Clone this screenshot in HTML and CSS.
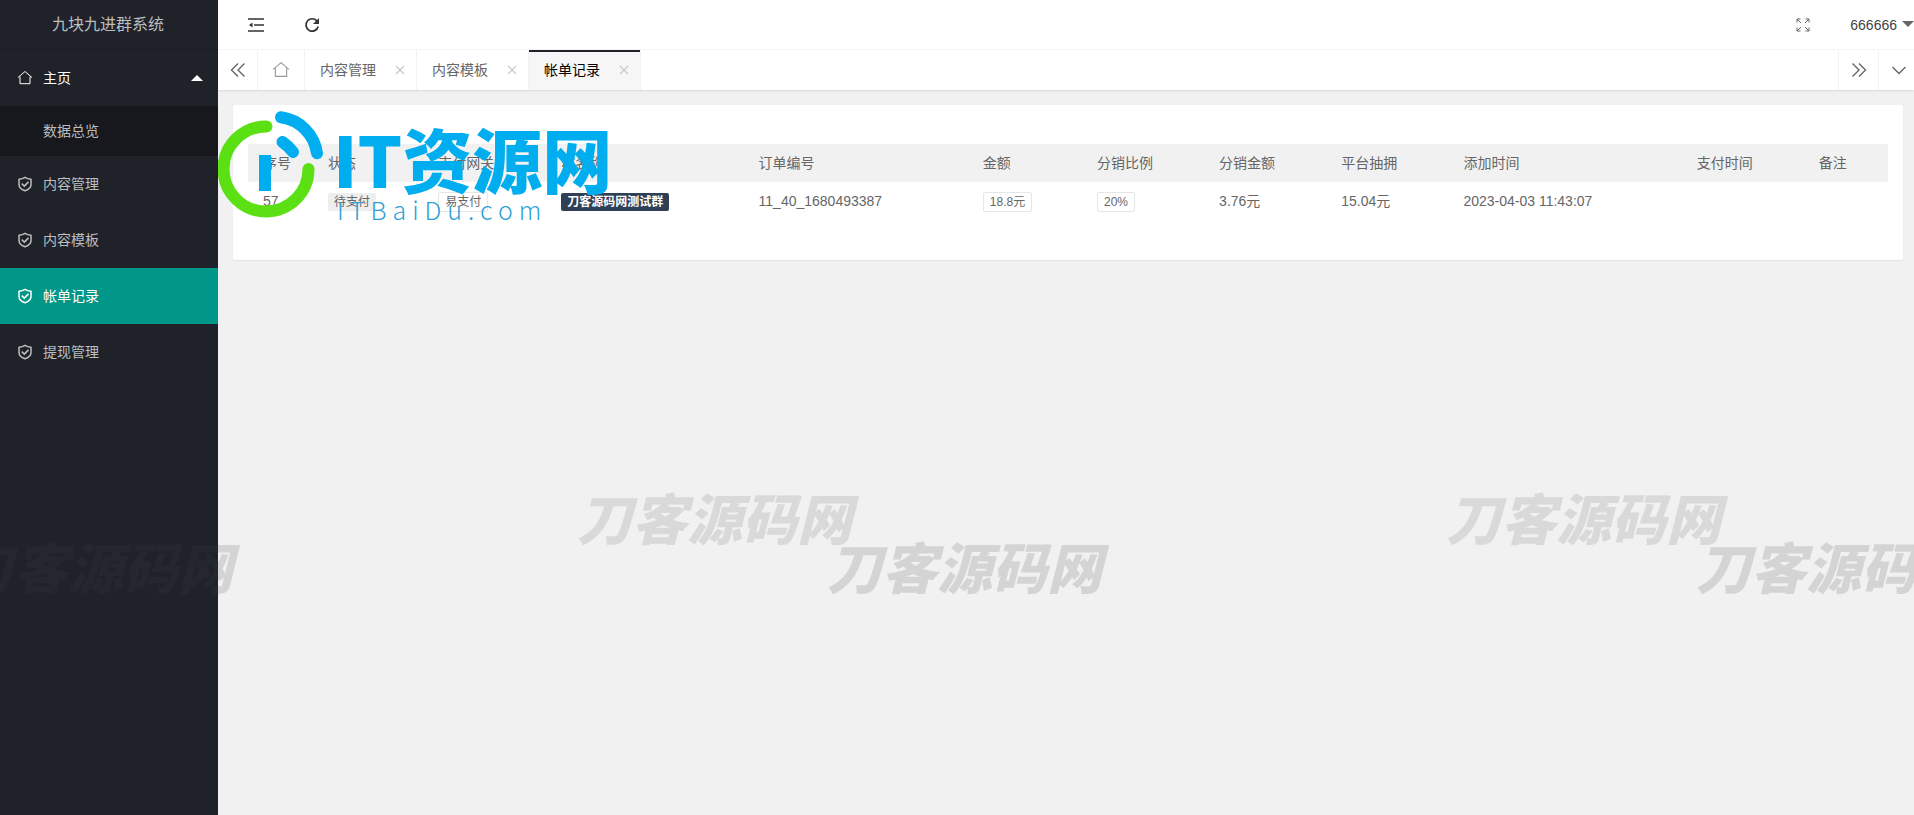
FILE: index.html
```html
<!DOCTYPE html>
<html lang="zh-CN">
<head>
<meta charset="utf-8">
<title>九块九进群系统</title>
<link rel="stylesheet" href="styles.css">
</head>
<body>
<svg class="defs" width="0" height="0" aria-hidden="true">
  <symbol id="home" viewBox="0 0 16 16"><path d="M1 7.500 8 1.500l7 6M3 6.500v7.200h10V6.500" fill="none" stroke="currentColor" stroke-linejoin="round"/></symbol>
  <symbol id="shield" viewBox="0 0 16 16"><path d="M8 1.300c2 1.400 4 1.700 6 1.900v5.300c0 3-2.500 5-6 6.300-3.500-1.300-6-3.300-6-6.300V3.200c2-.2 4-.5 6-1.900z" fill="none" stroke="currentColor" stroke-width="1.500" stroke-linejoin="round"/><path d="m4.800 7.600 2.500 2.500 4.200-4.200" fill="none" stroke="currentColor" stroke-width="1.500"/></symbol>
  <symbol id="close" viewBox="0 0 10 10"><path d="m1 1 8 8M9 1 1 9" fill="none" stroke="currentColor" stroke-width="1.200"/></symbol>
</svg>
<div class="app">
  <aside class="side">
    <h1 class="brand">九块九进群系统</h1>
    <nav class="menu">
      <a class="item open" href="#"><svg class="icon"><use href="#home"/></svg>主页<span class="arrow-up"></span></a>
      <div class="submenu"><a href="#">数据总览</a></div>
      <a class="item" href="#"><svg class="icon"><use href="#shield"/></svg>内容管理</a>
      <a class="item" href="#"><svg class="icon"><use href="#shield"/></svg>内容模板</a>
      <a class="item current" href="#"><svg class="icon"><use href="#shield"/></svg>帐单记录</a>
      <a class="item" href="#"><svg class="icon"><use href="#shield"/></svg>提现管理</a>
    </nav>
  </aside>
  <div class="content">
    <header class="topbar">
      <button class="tool" aria-label="侧边伸缩"><svg width="16" height="14" viewBox="0 0 16 14"><path d="M0 1h16M6 7h10M0 13h16" stroke="currentColor" stroke-width="1.600"/><path d="M4.500 4.600v4.800L1 7z" fill="currentColor"/></svg></button>
      <button class="tool" aria-label="刷新"><svg width="16" height="16" viewBox="0 0 16 16"><path d="M13.300 4.400A6.200 6.200 0 1 0 14.200 9.500" fill="none" stroke="currentColor" stroke-width="1.700"/><path d="M15 1v6H9z" fill="currentColor"/></svg></button>
      <span class="spacer"></span>
      <button class="tool full" aria-label="全屏"><svg width="14" height="14" viewBox="0 0 14 14"><path d="M5 5 1 1M9 5l4-4M5 9l-4 4M9 9l4 4M1 4.500V1h3.500M9.500 1H13v3.500M1 9.500V13h3.500M9.500 13H13V9.500" fill="none" stroke="currentColor"/></svg></button>
      <button class="user">666666<span class="arrow-down"></span></button>
    </header>
    <div class="tabs">
      <button class="ctl left" aria-label="向左"><svg width="16" height="16" viewBox="0 0 16 16"><path d="M8 1.500 1.500 8 8 14.500M14.500 1.500 8 8l6.500 6.500" fill="none" stroke="currentColor" stroke-width="1.400"/></svg></button>
      <button class="home" aria-label="主页"><svg width="18" height="18"><use href="#home"/></svg></button>
      <div class="tab"><a href="#">内容管理</a><button class="close" aria-label="关闭"><svg width="10" height="10"><use href="#close"/></svg></button></div>
      <div class="tab"><a href="#">内容模板</a><button class="close" aria-label="关闭"><svg width="10" height="10"><use href="#close"/></svg></button></div>
      <div class="tab active"><a href="#">帐单记录</a><button class="close" aria-label="关闭"><svg width="10" height="10"><use href="#close"/></svg></button></div>
      <span class="spacer"></span>
      <button class="ctl" aria-label="向右"><svg width="16" height="16" viewBox="0 0 16 16"><path d="M1.500 1.500 8 8l-6.500 6.500M8 1.500 14.500 8 8 14.500" fill="none" stroke="currentColor" stroke-width="1.400"/></svg></button>
      <button class="ctl last" aria-label="更多"><svg width="16" height="16" viewBox="0 0 16 16"><path d="m1.500 5 6.500 6.500L14.500 5" fill="none" stroke="currentColor" stroke-width="1.400"/></svg></button>
    </div>
    <main class="page">
      <section class="card">
        <table class="orders">
          <colgroup><col class="c-id"><col class="c-state"><col class="c-gate"><col class="c-name"><col class="c-no"><col class="c-sum"><col class="c-mid"><col class="c-mid"><col class="c-mid"><col class="c-time"><col class="c-mid"><col class="c-note"></colgroup>
          <thead><tr><th>序号</th><th>状态</th><th>支付网关</th><th>群名称</th><th>订单编号</th><th>金额</th><th>分销比例</th><th>分销金额</th><th>平台抽拥</th><th>添加时间</th><th>支付时间</th><th>备注</th></tr></thead>
          <tbody><tr><td>57</td><td><span class="badge gray">待支付</span></td><td><span class="badge line">易支付</span></td><td><span class="badge navy">刀客源码网测试群</span></td><td>11_40_1680493387</td><td><span class="badge line">18.8元</span></td><td><span class="badge line">20%</span></td><td>3.76元</td><td>15.04元</td><td>2023-04-03 11:43:07</td><td></td><td></td></tr></tbody>
        </table>
      </section>
    </main>
  </div>
  <div class="overlay">
    <div class="stamp">
      <svg width="106" height="108" viewBox="218 111 106 108"><g fill="none" stroke-width="12" stroke-linecap="round"><path d="M266.500 126.500A42.500 42.500 0 1 0 308.500 169" stroke="#5be014"/><path d="M281 117.300A42 42 0 0 1 317 153.300M282.500 142q6 4 10.500 10" stroke="#00adee"/></g><path d="M259 155h12v36h-12z" fill="#00adee"/></svg>
      <div class="stamp-words"><div class="stamp-name">IT资源网</div><div class="stamp-site">ITBaiDu.com</div></div>
    </div>
    <div class="mark m1">刀客源码网</div>
    <div class="mark m2">刀客源码网</div>
    <div class="mark dark m3">刀客源码网</div>
    <div class="mark dark m4">刀客源码网</div>
    <div class="mark dark m5">刀客源码网</div>
  </div>
</div>
</body>
</html>
```
FILE: styles.css
```css
* { box-sizing: border-box; }
body { margin: 0; background: #f1f1f1; color: #666; font: 14px/24px "Liberation Sans", "Noto Sans CJK SC", sans-serif; }
a { color: inherit; text-decoration: none; }
button { margin: 0; padding: 0; border: 0; background: none; color: inherit; font: inherit; }
svg { display: block; }
.defs { position: absolute; }
.app { display: flex; min-height: 100vh; position: relative; overflow: hidden; }
.side { width: 218px; flex: none; background: #20222a; color: #bcbdbf; }
.brand { margin: 0; height: 50px; line-height: 50px; padding-right: 2px; border-bottom: 1px solid #1b1d24; text-align: center; font-size: 16px; font-weight: 400; }
.item { display: flex; align-items: center; height: 56px; padding: 0 15px 0 17px; gap: 10px; }
.icon { width: 16px; height: 16px; }
.item.open { color: #fff; }
.item.current { background: #009688; color: #fff; }
.arrow-up { margin-left: auto; border: 6px solid transparent; border-top: 0; border-bottom-color: #fff; }
.submenu { padding: 5px 0; background: #17181e; }
.submenu a { display: block; padding-left: 43px; line-height: 40px; }
.content { flex: 1; min-width: 0; }
.topbar { display: flex; align-items: center; height: 50px; padding-top: 1px; background: #fff; border-bottom: 1px solid #f6f6f6; color: #333; }
.tool { display: grid; place-items: center; width: 46px; height: 48px; margin-left: 15px; }
.tool + .tool { margin-left: 14px; width: 38px; }
.tool.full { color: #666; }
.spacer { flex: 1; }
.user { display: flex; align-items: center; gap: 5px; margin-left: 24px; color: #444; white-space: nowrap; }
.arrow-down { width: 11px; border: 6px solid transparent; border-bottom: 0; border-top-color: #666; margin-bottom: 3px; }
.tabs { display: flex; height: 40px; background: #fff; box-shadow: 0 1px 2px rgba(0,0,0,.1); position: relative; }
.ctl { display: grid; place-items: center; width: 40px; border-left: 1px solid #f2f2f2; }
.ctl.left { border-left: 0; border-right: 1px solid #f2f2f2; }
.ctl.last { width: 36px; padding-left: 5px; }
.home { display: grid; place-items: center; width: 47px; border-right: 1px solid #f2f2f2; color: #999; }
.tab { display: flex; align-items: center; gap: 19px; width: 112px; padding-left: 15px; border-right: 1px solid #f2f2f2; white-space: nowrap; }
.close { color: #c8c8c8; }
.tab.active { background: #f6f6f6; color: #000; box-shadow: inset 0 2px #20222a; }
.page { padding: 15px 11px 15px 15px; }
.card { padding: 39px 15px 40px; background: #fff; border-radius: 2px; box-shadow: 0 1px 2px rgba(0,0,0,.06); }
.orders { width: 100%; table-layout: fixed; border-collapse: collapse; }
.orders th, .orders td { height: 38px; padding: 0 0 0 15px; text-align: left; font-weight: 400; white-space: nowrap; }
.orders th { background: #f1f1f1; }
.c-id { width: 65px; } .c-state { width: 110px; } .c-gate { width: 123px; } .c-name { width: 197px; }
.c-no { width: 224px; } .c-sum { width: 114px; } .c-mid { width: 122px; } .c-time { width: 233px; } .c-note { width: 84px; }
.badge { display: inline-block; padding: 0 6px; border-radius: 2px; font-size: 12px; line-height: 18px; vertical-align: middle; }
.gray { background: #eee; }
.line { border: 1px solid #e6e6e6; }
.navy { background: #2f4056; color: #fff; font-weight: 700; }
.overlay { position: absolute; inset: 0; overflow: hidden; pointer-events: none; }
.stamp { position: absolute; left: 218px; top: 111px; display: flex; gap: 9px; }
.stamp-words { padding-top: 11px; white-space: nowrap; }
.stamp-name { color: #00adee; font: 900 70px/72px "Noto Sans CJK SC", sans-serif; }
.stamp-site { padding-left: 4px; color: #2e9fd4; font: 300 25px/30px "Noto Sans CJK SC", sans-serif; letter-spacing: 6px; }
.mark { position: absolute; color: rgba(64,64,64,.13); font: italic 900 55px/55px "Noto Sans CJK SC", sans-serif; white-space: nowrap; }
.mark.dark { color: rgba(64,64,64,.165); }
.m1 { left: 577px; top: 489px; } .m2 { left: 1446px; top: 489px; }
.m3 { left: -42px; top: 538px; } .m4 { left: 827px; top: 538px; } .m5 { left: 1696px; top: 538px; }
```
